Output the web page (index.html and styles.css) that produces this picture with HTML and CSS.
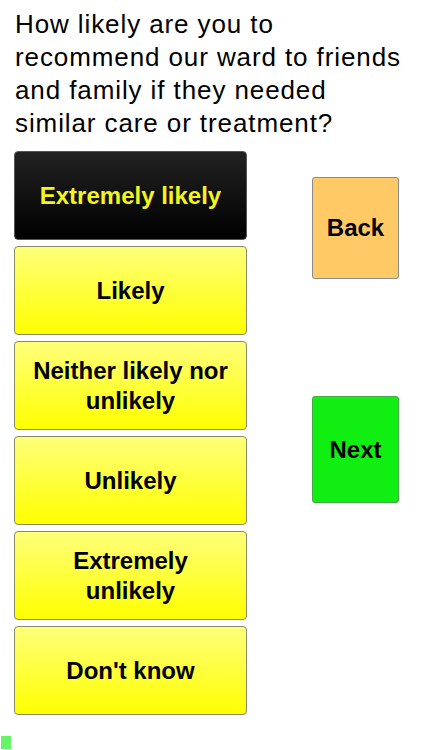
FILE: index.html
```html
<!DOCTYPE html>
<html lang="en">
<head>
    <meta charset="UTF-8">
    <meta name="viewport" content="width=device-width, initial-scale=1.0">
    <title>Friends and Family Test</title>
    <link rel="stylesheet" href="styles.css">
</head>
<body>
    <h1 class="question">How likely are you to<br>recommend our ward to friends<br>and family if they needed<br>similar care or treatment?</h1>

    <div class="survey">
        <div class="answers">
            <button type="button" class="answer selected">Extremely likely</button>
            <button type="button" class="answer">Likely</button>
            <button type="button" class="answer">Neither likely nor unlikely</button>
            <button type="button" class="answer">Unlikely</button>
            <button type="button" class="answer">Extremely unlikely</button>
            <button type="button" class="answer">Don't know</button>
        </div>

        <div class="nav-buttons">
            <button type="button" class="nav-btn back">Back</button>
            <button type="button" class="nav-btn next">Next</button>
        </div>
    </div>

    <div class="status-dot"></div>
</body>
</html>
```

FILE: styles.css
```css
* {
    margin: 0;
    padding: 0;
    box-sizing: border-box;
}

body {
    font-family: 'Liberation Sans', Arial, sans-serif;
    background-color: #fff;
    color: #000;
    width: 422px;
    height: 750px;
    overflow: hidden;
}

/* 질문 */
.question {
    font-size: 26px;
    font-weight: normal;
    line-height: 33px;
    letter-spacing: 0.9px;
    padding: 8px 0 0 15px;
    white-space: nowrap;
}

.survey {
    display: flex;
    margin-top: 11px;
}

.answers {
    display: flex;
    flex-direction: column;
    gap: 6px;
    margin-left: 14px;
    width: 233px;
}

.answer {
    height: 89px;
    border: 1px solid #8a8a6a;
    border-radius: 4px;
    background: linear-gradient(to bottom, #ffff7a, #ffff00);
    font-family: inherit;
    font-size: 24px;
    font-weight: bold;
    line-height: 30px;
    color: #000;
    padding: 0 14px;
    cursor: pointer;
}

.answer.selected {
    background: linear-gradient(to bottom, #222, #000);
    border-color: #555;
    color: #f5f51e;
}

/* 이전 / 다음 버튼 */
.nav-buttons {
    display: flex;
    flex-direction: column;
    margin-left: 65px;
    padding-top: 26px;
}

.nav-btn {
    width: 87px;
    border: 1px solid #8a8a8a;
    border-radius: 3px;
    font-family: inherit;
    font-size: 24px;
    font-weight: bold;
    color: #000;
    cursor: pointer;
}

.back {
    height: 102px;
    background-color: #ffc966;
}

.next {
    height: 107px;
    margin-top: 117px;
    background-color: #11ee11;
    border-color: #44aa44;
}

.status-dot {
    width: 10px;
    height: 13px;
    margin: 21px 0 0 1px;
    background-color: #66f566;
}
```
